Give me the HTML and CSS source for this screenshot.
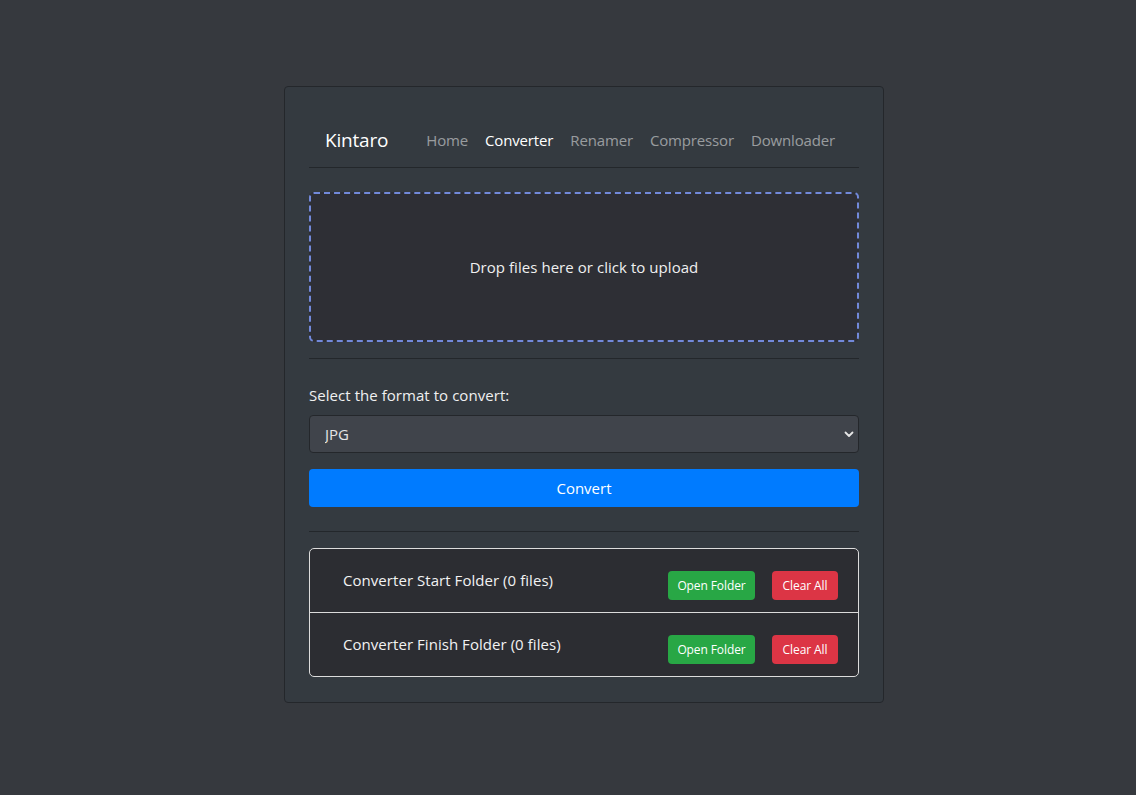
FILE: index.html
```html
<!DOCTYPE html>
<html lang="en">
<head>
<meta charset="utf-8">
<title>Kintaro - Converter</title>
<link rel="stylesheet" href="styles.css">
</head>
<body>
<div class="page">
  <div class="card">
    <nav class="navbar">
      <span class="brand">Kintaro</span>
      <ul class="nav">
        <li><a class="nav-link">Home</a></li>
        <li><a class="nav-link active">Converter</a></li>
        <li><a class="nav-link">Renamer</a></li>
        <li><a class="nav-link">Compressor</a></li>
        <li><a class="nav-link">Downloader</a></li>
      </ul>
    </nav>

    <div class="dropzone">Drop files here or click to upload</div>

    <hr class="divider">

    <label class="label" for="fmt">Select the format to convert:</label>
    <div class="select-wrap">
      <select id="fmt" class="select">
        <option>JPG</option>
        <option>PNG</option>
        <option>WEBP</option>
      </select>
      <svg class="chevron" width="10" height="8" viewBox="0 0 10 8"><path d="M1.5 2.5 L5 6 L8.5 2.5" fill="none" stroke="#e6e6e6" stroke-width="1.8" stroke-linecap="round" stroke-linejoin="round"/></svg>
    </div>
    <button class="btn-convert">Convert</button>

    <hr class="divider divider-lg">

    <ul class="list">
      <li class="list-item">
        <span class="folder-name">Converter Start Folder (0 files)</span>
        <div class="actions">
          <button class="btn btn-green">Open Folder</button>
          <button class="btn btn-red">Clear All</button>
        </div>
      </li>
      <li class="list-item">
        <span class="folder-name">Converter Finish Folder (0 files)</span>
        <div class="actions">
          <button class="btn btn-green">Open Folder</button>
          <button class="btn btn-red">Clear All</button>
        </div>
      </li>
    </ul>
  </div>
</div>
</body>
</html>
```

FILE: styles.css
```css
* { box-sizing: border-box; }

html, body {
  margin: 0;
  padding: 0;
  background: #36393e;
  font-family: "Open Sans", "Noto Sans", sans-serif;
  color: #f2f2f2;
}

.page {
  display: flex;
  justify-content: center;
  padding: 86px 0 60px 32px;
}

.card {
  width: 600px;
  background: #343a40;
  border: 1px solid #24272b;
  border-radius: 4px;
  padding: 24px 24px 25px;
}

.navbar {
  display: flex;
  align-items: center;
  padding: 14px 16px 12px;
  border-bottom: 1px solid #23272b;
  height: 57px;
}

.brand {
  font-size: 19px;
  line-height: 30px;
  color: #fff;
  margin-right: 30px;
  letter-spacing: -0.2px;
}

.nav {
  display: flex;
  list-style: none;
  margin: 0;
  padding: 0;
  gap: 1px;
}

.nav-link {
  display: block;
  padding: 0 8px;
  font-size: 15px;
  line-height: 30px;
  color: rgba(255, 255, 255, 0.5);
  letter-spacing: -0.15px;
}

.nav-link.active { color: #fff; }

.dropzone {
  margin-top: 24px;
  height: 150px;
  border: 2px dashed #7289da;
  border-radius: 5px;
  background: #2e2f35;
  display: flex;
  align-items: center;
  justify-content: center;
  font-size: 15px;
  color: #f0f0f0;
  letter-spacing: 0.05px;
}

.divider {
  border: 0;
  border-top: 1px solid #23272b;
  margin: 16px 0 0;
}

.divider-lg { margin-top: 24px; }

.label {
  display: block;
  margin-top: 24px;
  font-size: 15px;
  line-height: 24px;
  color: #f0f0f0;
  letter-spacing: 0.05px;
}

.select-wrap {
  position: relative;
  margin-top: 8px;
}

.select {
  display: block;
  width: 100%;
  height: 38px;
  appearance: none;
  -webkit-appearance: none;
  background: #40444b;
  border: 1px solid #24272b;
  border-radius: 4px;
  color: #e6e6e6;
  font-family: inherit;
  font-size: 15px;
  padding: 0 15px;
  outline: none;
}

.chevron {
  position: absolute;
  right: 5px;
  top: 15px;
}

.btn-convert {
  display: block;
  width: 100%;
  height: 38px;
  margin-top: 16px;
  background: #007bff;
  border: 0;
  border-radius: 4px;
  color: #fff;
  font-family: inherit;
  font-size: 15px;
}

.list {
  list-style: none;
  margin: 16px 0 0;
  padding: 0;
  border: 1px solid #dcdcdc;
  border-radius: 5px;
  background: #2c2d32;
  overflow: hidden;
}

.list-item {
  display: flex;
  align-items: flex-start;
  justify-content: space-between;
  height: 63px;
  padding: 19px 20px 0 33px;
}

.list-item + .list-item {
  border-top: 1px solid #dcdcdc;
  height: 64px;
}

.folder-name {
  font-size: 15px;
  line-height: 24px;
  color: #f2f2f2;
  letter-spacing: 0.05px;
}

.actions {
  display: flex;
  gap: 17px;
  margin-top: 3px;
}

.btn {
  height: 29px;
  border: 0;
  border-radius: 4px;
  color: #fff;
  font-family: inherit;
  font-size: 12px;
  padding: 0;
  white-space: nowrap;
  letter-spacing: -0.1px;
}

.btn-green { background: #28a745; width: 87px; }
.btn-red { background: #dc3545; width: 66px; }
```
